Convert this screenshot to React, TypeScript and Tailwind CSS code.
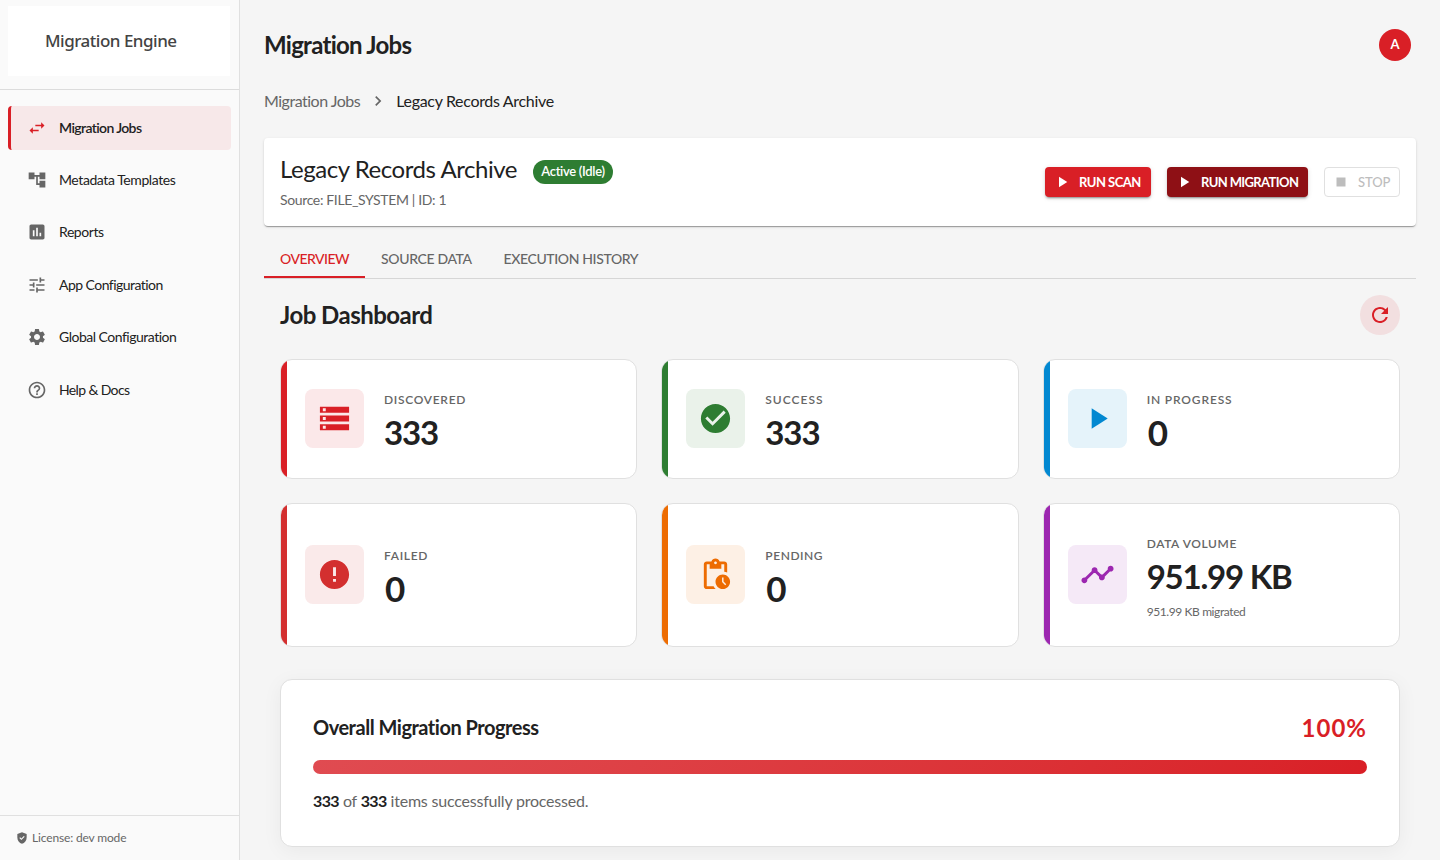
import type { ReactNode } from "react";
import type { IconType } from "react-icons";
import {
  MdAccountTree,
  MdAssessment,
  MdCheckCircle,
  MdError,
  MdGppGood,
  MdHelpOutline,
  MdNavigateNext,
  MdPendingActions,
  MdPlayArrow,
  MdRefresh,
  MdSettings,
  MdStop,
  MdStorage,
  MdSwapHoriz,
  MdTimeline,
  MdTune,
} from "react-icons/md";

interface NavEntry {
  label: string;
  icon: IconType;
  text: string;
  active?: boolean;
}

const NAV: NavEntry[] = [
  { label: "Migration Jobs", icon: MdSwapHoriz, text: "font-semibold tracking-[-0.62px]", active: true },
  { label: "Metadata Templates", icon: MdAccountTree, text: "tracking-[-0.42px]" },
  { label: "Reports", icon: MdAssessment, text: "tracking-[-0.42px]" },
  { label: "App Configuration", icon: MdTune, text: "tracking-[-0.54px]" },
  { label: "Global Configuration", icon: MdSettings, text: "tracking-[-0.5px]" },
  { label: "Help & Docs", icon: MdHelpOutline, text: "tracking-[-0.64px]" },
];

function Sidebar() {
  return (
    <aside className="flex w-60 shrink-0 flex-col border-r border-[#e0e0e0] bg-[#fafafa]">
      <div className="h-[90px] border-b border-[#dcdcdc] pt-1.5 pl-2">
        <div className="flex h-[70px] w-[222px] items-center bg-white pl-[37px]">
          <span className="font-['Noto_Sans',sans-serif] text-[17px] font-medium tracking-[-0.5px] text-[#434343]">
            Migration Engine
          </span>
        </div>
      </div>
      <nav className="flex flex-1 flex-col gap-2 pt-[15.5px] pr-2 pl-2">
        {NAV.map(({ label, icon: Icon, text, active }) => (
          <a
            key={label}
            className={
              active
                ? "flex h-[44.375px] items-center rounded border-l-[3px] border-[#d91f26] bg-[#f7e8e9] pl-4"
                : "flex h-[44.375px] items-center rounded border-l-[3px] border-transparent pl-4"
            }
          >
            <Icon className={active ? "size-5 text-[#d91f26]" : "size-5 text-[#666666]"} />
            <span className={`ml-3 text-sm whitespace-nowrap text-[#212121] ${text}`}>{label}</span>
          </a>
        ))}
      </nav>
      <div className="flex h-[45px] items-center gap-[3px] border-t border-[#e0e0e0] pl-[15px] text-[#666666]">
        <MdGppGood className="size-3.5" />
        <span className="text-xs tracking-[-0.15px]">License: dev mode</span>
      </div>
    </aside>
  );
}

interface StatProps {
  label: string;
  labelClass: string;
  value: string;
  valueClass: string;
  icon: IconType;
  accent: string;
  tile: string;
  children?: ReactNode;
}

function StatCard({ label, labelClass, value, valueClass, icon: Icon, accent, tile, children }: StatProps) {
  return (
    <div className="flex overflow-hidden rounded-xl border border-[#e0e0e0] bg-white">
      <div className={`w-1.5 shrink-0 ${accent}`} />
      <div className="flex flex-1 items-center pl-[18px]">
        <div className={`mb-px flex size-[59px] shrink-0 items-center justify-center rounded-lg ${tile}`}>
          <Icon className="size-[35px]" />
        </div>
        <div className="mt-[5px] ml-5">
          <div className={`text-xs leading-5 font-semibold text-[#666666] ${labelClass}`}>{label}</div>
          <div className={`mt-0.5 h-[41px] leading-[41px] font-bold text-[#212121] ${valueClass}`}>{value}</div>
          {children}
        </div>
      </div>
    </div>
  );
}

function Dashboard() {
  return (
    <section className="px-4 pt-4">
      <div className="flex h-10 items-center justify-between">
        <h2 className="text-2xl font-bold tracking-[-0.52px]">Job Dashboard</h2>
        <button className="flex size-10 items-center justify-center rounded-full bg-[#f2dfe0] text-[#d91f26]">
          <MdRefresh className="size-6" />
        </button>
      </div>
      <div className="mt-6 grid grid-cols-3 grid-rows-[120px_144px] gap-6">
        <StatCard
          label="DISCOVERED"
          labelClass="tracking-[0.7px]"
          value="333"
          valueClass="text-[33px] tracking-[-1.1px]"
          icon={MdStorage}
          accent="bg-[#d91f26]"
          tile="bg-[#fbe8e9] text-[#d91f26]"
        />
        <StatCard
          label="SUCCESS"
          labelClass="tracking-[1px]"
          value="333"
          valueClass="text-[33px] tracking-[-1.1px]"
          icon={MdCheckCircle}
          accent="bg-[#2e7d32]"
          tile="bg-[#eaf2ea] text-[#2e7d32]"
        />
        <StatCard
          label="IN PROGRESS"
          labelClass="tracking-[0.84px]"
          value="0"
          valueClass="pl-px text-[35px]"
          icon={MdPlayArrow}
          accent="bg-[#0288d1]"
          tile="bg-[#e5f3fa] text-[#0288d1]"
        />
        <StatCard
          label="FAILED"
          labelClass="tracking-[0.68px]"
          value="0"
          valueClass="pl-px text-[35px]"
          icon={MdError}
          accent="bg-[#d32f2f]"
          tile="bg-[#faeaea] text-[#d32f2f]"
        />
        <StatCard
          label="PENDING"
          labelClass="tracking-[0.55px]"
          value="0"
          valueClass="pl-px text-[35px]"
          icon={MdPendingActions}
          accent="bg-[#ed6c02]"
          tile="bg-[#fdf0e5] text-[#ed6c02]"
        />
        <StatCard
          label="DATA VOLUME"
          labelClass="tracking-[0.62px]"
          value="951.99 KB"
          valueClass="text-[33px] tracking-[-1.22px]"
          icon={MdTimeline}
          accent="bg-[#9c27b0]"
          tile="bg-[#f5e9f7] text-[#9c27b0]"
        >
          <div className="mt-[5px] text-xs leading-5 tracking-[-0.4px] text-[#666666]">951.99 KB migrated</div>
        </StatCard>
      </div>
      <div className="mt-8 h-[168px] rounded-xl border border-[#e0e0e0] bg-white px-8 pt-8 shadow-[0_4px_20px_rgba(0,0,0,0.05)]">
        <div className="flex h-8 items-center justify-between">
          <h3 className="mb-0.5 text-xl font-bold tracking-[-0.48px]">Overall Migration Progress</h3>
          <span className="text-2xl font-bold tracking-[1px] text-[#d91f26]">100%</span>
        </div>
        <div className="mt-4 h-3.5 rounded-full bg-linear-135 from-[#e04b51] to-[#d91f26]" />
        <p className="mt-[15px] text-base tracking-[-0.21px] text-[#666666]">
          <strong className="font-bold tracking-[-0.6px] text-[#212121]">333</strong> of{" "}
          <strong className="font-bold tracking-[-0.6px] text-[#212121]">333</strong> items successfully processed.
        </p>
      </div>
    </section>
  );
}

export default function App() {
  return (
    <div className="flex h-[860px] overflow-hidden bg-[#f5f5f5] font-['Lato',sans-serif] text-[#212121]">
      <Sidebar />
      <main className="flex-1 px-6 pt-[29px]">
        <header className="flex h-8 items-center justify-between pr-[5px]">
          <h1 className="text-2xl font-bold tracking-[-0.73px]">Migration Jobs</h1>
          <div className="flex size-8 items-center justify-center rounded-full bg-[#d91f26] pb-px text-[13px] font-bold text-white">
            A
          </div>
        </header>
        <div className="mt-7 flex h-6 items-center text-base whitespace-nowrap">
          <span className="tracking-[-0.49px] text-[#666666]">Migration Jobs</span>
          <MdNavigateNext className="mr-[8.5px] ml-[7.5px] size-5 text-[#666666]" />
          <span className="tracking-[-0.32px]">Legacy Records Archive</span>
        </div>
        <section className="mt-[25px] flex h-[88px] items-center justify-between rounded bg-white px-4 shadow-[0_2px_1px_-1px_rgba(0,0,0,0.2),0_1px_1px_0_rgba(0,0,0,0.14),0_1px_3px_0_rgba(0,0,0,0.12)]">
          <div>
            <div className="flex h-8 items-center gap-4">
              <h2 className="mb-0.5 text-2xl tracking-[-0.45px]">Legacy Records Archive</h2>
              <span className="mt-1 flex h-6 w-20 items-center justify-center rounded-full bg-[#2e7d32] text-[13px] font-semibold tracking-[-0.3px] whitespace-nowrap text-white">
                Active (Idle)
              </span>
            </div>
            <p className="mt-1 text-sm tracking-[-0.36px] text-[#666666]">Source: FILE_SYSTEM | ID: 1</p>
          </div>
          <div className="flex gap-4 text-[13px] whitespace-nowrap">
            <button className="flex h-[30px] w-[106px] items-center rounded bg-[#d91f26] pl-2 font-bold text-white shadow-[0_3px_1px_-2px_rgba(0,0,0,0.2),0_2px_2px_0_rgba(0,0,0,0.14),0_1px_5px_0_rgba(0,0,0,0.12)]">
              <MdPlayArrow className="mr-2 size-[18px]" />
              <span className="pt-0.5 tracking-[-0.5px]">RUN SCAN</span>
            </button>
            <button className="flex h-[30px] w-[141px] items-center rounded bg-[#8e1015] pl-2 font-bold text-white shadow-[0_3px_1px_-2px_rgba(0,0,0,0.2),0_2px_2px_0_rgba(0,0,0,0.14),0_1px_5px_0_rgba(0,0,0,0.12)]">
              <MdPlayArrow className="mr-2 size-[18px]" />
              <span className="pt-0.5 tracking-[-0.62px]">RUN MIGRATION</span>
            </button>
            <button className="flex h-[30px] w-[76px] items-center rounded border border-[#e0e0e0] pl-[7px] font-medium text-[#bdbdbd]">
              <MdStop className="mr-2 size-[18px]" />
              <span className="pt-0.5 tracking-[-0.1px]">STOP</span>
            </button>
          </div>
        </section>
        <div className="mt-[14px] flex h-[39px] border-b border-[#d6d6d6] text-sm font-medium whitespace-nowrap text-[#666666]">
          <div className="flex h-[38px] w-[101px] items-center border-b-2 border-[#d91f26] pt-0.5 pl-4 tracking-[-0.53px] text-[#d91f26]">
            OVERVIEW
          </div>
          <div className="flex h-[38px] w-[122.5px] items-center border-b-2 border-transparent pt-0.5 pl-4 tracking-[-0.35px]">
            SOURCE DATA
          </div>
          <div className="flex h-[38px] items-center border-b-2 border-transparent px-4 pt-0.5 tracking-[-0.38px]">
            EXECUTION HISTORY
          </div>
        </div>
        <Dashboard />
      </main>
    </div>
  );
}
